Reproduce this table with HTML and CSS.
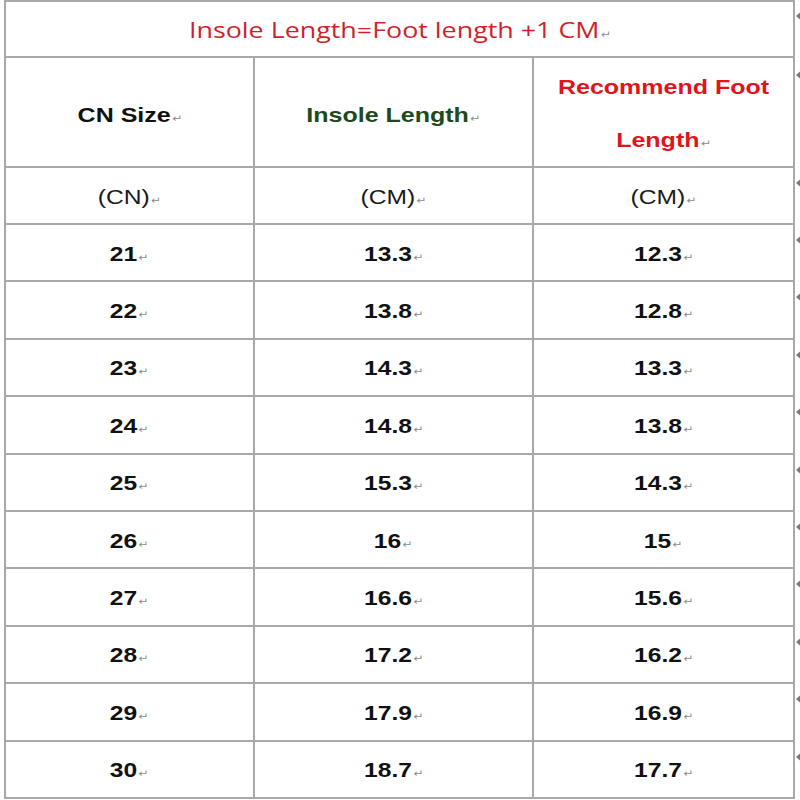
FILE: index.html
```html
<!DOCTYPE html>
<html>
<head>
<meta charset="utf-8">
<link rel="stylesheet" href="styles.css">
</head>
<body>
<div class="chart">
  <div class="cell title"><span class="t">Insole Length=Foot length +1 CM<i class="pm">↵</i></span></div>
  <div class="mark first"><svg viewBox="0 0 6 8" width="6" height="8"><polygon points="0,4 4,0.5 4,7.5"/><rect x="3" y="3" width="3" height="2"/></svg></div>

  <div class="cell head"><span class="t">CN Size<i class="pm">↵</i></span></div>
  <div class="cell head green"><span class="t">Insole Length<i class="pm">↵</i></span></div>
  <div class="cell head red"><span class="t">Recommend Foot<br>Length<i class="pm">↵</i></span></div>
  <div class="mark second"><svg viewBox="0 0 6 8" width="6" height="8"><polygon points="0,4 4,0.5 4,7.5"/><rect x="3" y="3" width="3" height="2"/></svg></div>

  <div class="cell unit"><span class="t">(CN)<i class="pm">↵</i></span></div>
  <div class="cell unit"><span class="t">(CM)<i class="pm">↵</i></span></div>
  <div class="cell unit"><span class="t">(CM)<i class="pm">↵</i></span></div>
  <div class="mark"><svg viewBox="0 0 6 8" width="6" height="8"><polygon points="0,4 4,0.5 4,7.5"/><rect x="3" y="3" width="3" height="2"/></svg></div>

  <div class="cell num"><span class="t">21<i class="pm">↵</i></span></div>
  <div class="cell num"><span class="t">13.3<i class="pm">↵</i></span></div>
  <div class="cell num"><span class="t">12.3<i class="pm">↵</i></span></div>
  <div class="mark"><svg viewBox="0 0 6 8" width="6" height="8"><polygon points="0,4 4,0.5 4,7.5"/><rect x="3" y="3" width="3" height="2"/></svg></div>

  <div class="cell num"><span class="t">22<i class="pm">↵</i></span></div>
  <div class="cell num"><span class="t">13.8<i class="pm">↵</i></span></div>
  <div class="cell num"><span class="t">12.8<i class="pm">↵</i></span></div>
  <div class="mark"><svg viewBox="0 0 6 8" width="6" height="8"><polygon points="0,4 4,0.5 4,7.5"/><rect x="3" y="3" width="3" height="2"/></svg></div>

  <div class="cell num"><span class="t">23<i class="pm">↵</i></span></div>
  <div class="cell num"><span class="t">14.3<i class="pm">↵</i></span></div>
  <div class="cell num"><span class="t">13.3<i class="pm">↵</i></span></div>
  <div class="mark"><svg viewBox="0 0 6 8" width="6" height="8"><polygon points="0,4 4,0.5 4,7.5"/><rect x="3" y="3" width="3" height="2"/></svg></div>

  <div class="cell num"><span class="t">24<i class="pm">↵</i></span></div>
  <div class="cell num"><span class="t">14.8<i class="pm">↵</i></span></div>
  <div class="cell num"><span class="t">13.8<i class="pm">↵</i></span></div>
  <div class="mark"><svg viewBox="0 0 6 8" width="6" height="8"><polygon points="0,4 4,0.5 4,7.5"/><rect x="3" y="3" width="3" height="2"/></svg></div>

  <div class="cell num"><span class="t">25<i class="pm">↵</i></span></div>
  <div class="cell num"><span class="t">15.3<i class="pm">↵</i></span></div>
  <div class="cell num"><span class="t">14.3<i class="pm">↵</i></span></div>
  <div class="mark"><svg viewBox="0 0 6 8" width="6" height="8"><polygon points="0,4 4,0.5 4,7.5"/><rect x="3" y="3" width="3" height="2"/></svg></div>

  <div class="cell num"><span class="t">26<i class="pm">↵</i></span></div>
  <div class="cell num"><span class="t">16<i class="pm">↵</i></span></div>
  <div class="cell num"><span class="t">15<i class="pm">↵</i></span></div>
  <div class="mark"><svg viewBox="0 0 6 8" width="6" height="8"><polygon points="0,4 4,0.5 4,7.5"/><rect x="3" y="3" width="3" height="2"/></svg></div>

  <div class="cell num"><span class="t">27<i class="pm">↵</i></span></div>
  <div class="cell num"><span class="t">16.6<i class="pm">↵</i></span></div>
  <div class="cell num"><span class="t">15.6<i class="pm">↵</i></span></div>
  <div class="mark"><svg viewBox="0 0 6 8" width="6" height="8"><polygon points="0,4 4,0.5 4,7.5"/><rect x="3" y="3" width="3" height="2"/></svg></div>

  <div class="cell num"><span class="t">28<i class="pm">↵</i></span></div>
  <div class="cell num"><span class="t">17.2<i class="pm">↵</i></span></div>
  <div class="cell num"><span class="t">16.2<i class="pm">↵</i></span></div>
  <div class="mark"><svg viewBox="0 0 6 8" width="6" height="8"><polygon points="0,4 4,0.5 4,7.5"/><rect x="3" y="3" width="3" height="2"/></svg></div>

  <div class="cell num"><span class="t">29<i class="pm">↵</i></span></div>
  <div class="cell num"><span class="t">17.9<i class="pm">↵</i></span></div>
  <div class="cell num"><span class="t">16.9<i class="pm">↵</i></span></div>
  <div class="mark"><svg viewBox="0 0 6 8" width="6" height="8"><polygon points="0,4 4,0.5 4,7.5"/><rect x="3" y="3" width="3" height="2"/></svg></div>

  <div class="cell num"><span class="t">30<i class="pm">↵</i></span></div>
  <div class="cell num"><span class="t">18.7<i class="pm">↵</i></span></div>
  <div class="cell num"><span class="t">17.7<i class="pm">↵</i></span></div>
  <div class="mark"><svg viewBox="0 0 6 8" width="6" height="8"><polygon points="0,4 4,0.5 4,7.5"/><rect x="3" y="3" width="3" height="2"/></svg></div>
</div>
</body>
</html>
```

FILE: styles.css
```css
html, body {
  margin: 0;
  padding: 0;
  background: #ffffff;
}

body {
  font-family: "Liberation Sans", Arial, sans-serif;
  color: #111111;
}

.chart {
  display: grid;
  grid-template-columns: 249px 279px 261px 6px;
  grid-template-rows: 58px 110px 57px repeat(10, 57.4px);
  margin-left: 4px;
  width: max-content;
  border-left: 2px solid #a9a9a9;
}

.cell {
  box-sizing: border-box;
  display: flex;
  align-items: center;
  justify-content: center;
  text-align: center;
  border-right: 2px solid #a9a9a9;
  border-bottom: 2px solid #a9a9a9;
  padding-top: 2px;
  overflow: hidden;
}

.cell.title {
  grid-column: 1 / span 3;
  border-top: 2px solid #a9a9a9;
  padding-top: 0;
}

.t {
  display: inline-block;
  transform: scaleX(1.2);
  transform-origin: center;
  white-space: nowrap;
}

.pm {
  font-style: normal;
  font-weight: normal;
  font-family: "DejaVu Sans", sans-serif;
  font-size: 10px;
  color: #8c8c8c;
  margin-left: 1px;
}

.title .t {
  font-family: "Open Sans", "Liberation Sans", sans-serif;
  font-size: 22px;
  font-weight: 500;
  color: #cf1f2c;
  transform: scaleX(1.22);
}

.head {
  padding-top: 5px;
}

.head .t {
  font-size: 20.5px;
  font-weight: bold;
  color: #111111;
  transform: scaleX(1.22);
}

.head.green .t {
  color: #1c4a1c;
}

.head.red .t {
  color: #e0141c;
  line-height: 53px;
}

.unit .t {
  font-size: 20.5px;
  font-weight: normal;
  color: #1a1a1a;
}

.num .t {
  font-size: 20.5px;
  font-weight: bold;
  color: #111111;
}

.mark {
  padding-top: 11px;
  padding-left: 1px;
  line-height: 0;
}

.mark.first {
  padding-top: 12px;
}

.mark.second {
  padding-top: 13px;
}

.mark svg {
  display: block;
  fill: #7a7a7a;
}
```
